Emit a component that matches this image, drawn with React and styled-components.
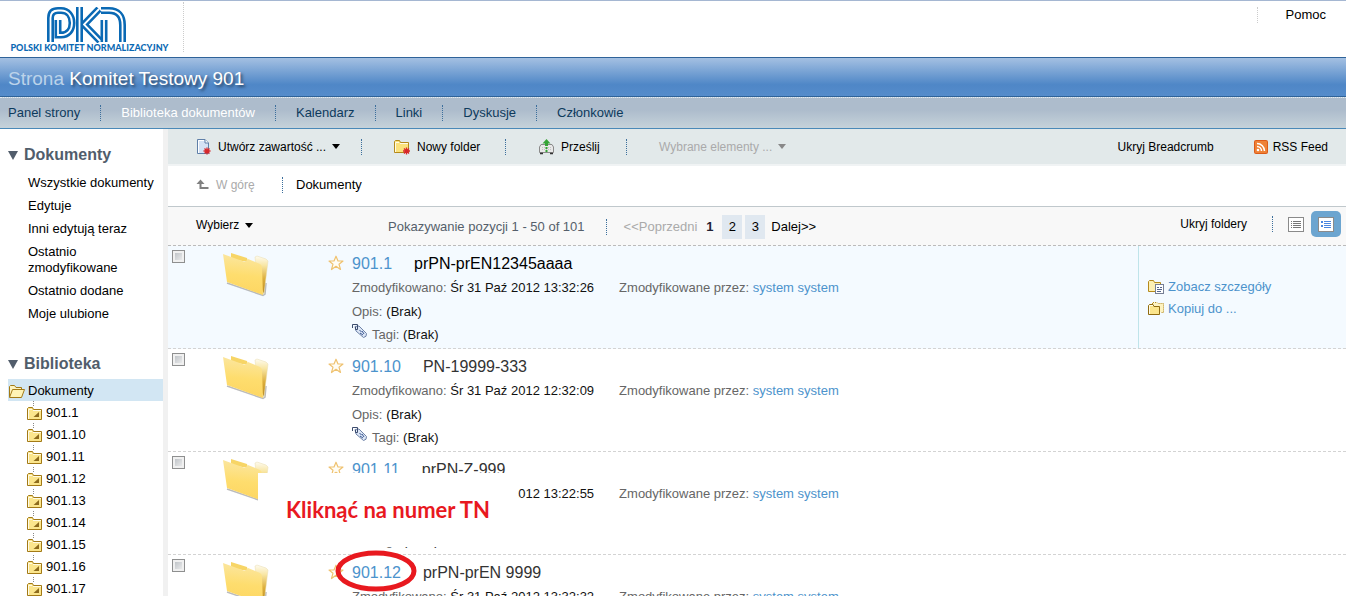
import React from "react";
import styled, { createGlobalStyle } from "styled-components";

const NAV = [
    { label: "Panel strony" },
    { label: "Biblioteka dokumentów", active: true },
    { label: "Kalendarz" },
    { label: "Linki" },
    { label: "Dyskusje" },
    { label: "Członkowie" },
];

const FILTERS = [
    "Wszystkie dokumenty",
    "Edytuje",
    "Inni edytują teraz",
    "Ostatnio zmodyfikowane",
    "Ostatnio dodane",
    "Moje ulubione",
];

const FOLDERS = ["901.1", "901.10", "901.11", "901.12", "901.13", "901.14", "901.15", "901.16", "901.17"];

const ROWS = [
    { id: "901.1", title: "prPN-prEN12345aaaa", date: "Śr 31 Paź 2012 13:32:26", hover: true },
    { id: "901.10", title: "PN-19999-333", date: "Śr 31 Paź 2012 12:32:09" },
    { id: "901.11", title: "prPN-Z-999", date: "Śr 31 Paź 2012 13:22:55", note: "Kliknąć na numer TN" },
    { id: "901.12", title: "prPN-prEN 9999", date: "Śr 31 Paź 2012 13:32:32", circled: true },
];

const LOGO_STROKES = [
    "M57 35V13",
    "M54 3.500H62C71 3.500 75.500 9 75.500 18V35",
    "M52 2L37 17.500L53 34",
    "M32.500 0V35",
    "M3.500 35V11Q3.500 3.500 11 3.500H14C21 3.500 25 9 25 16S21 28 14 28H11V13",
];

const LogoMark = () => (
    <svg width="80" height="36" viewBox="0 0 80 36" fill="none" aria-hidden="true">
        {LOGO_STROKES.map(d => (
            <g key={d}>
                <path d={d} stroke="#0a69b4" strokeWidth="7" />
                <path d={d} stroke="#fff" strokeWidth="1.800" />
            </g>
        ))}
    </svg>
);

const BigFolder = () => (
    <svg width="50" height="44" viewBox="0 0 50 44" aria-hidden="true">
        <defs>
            <linearGradient id="front" x1="0.3" y1="0" x2="0.2" y2="1">
                <stop offset="0" stopColor="#fbe6a0" />
                <stop offset="0.5" stopColor="#fedd6e" />
                <stop offset="1" stopColor="#fdd560" />
            </linearGradient>
            <linearGradient id="side" x1="0" y1="0" x2="0" y2="1">
                <stop offset="0" stopColor="#fefbf0" />
                <stop offset="0.25" stopColor="#f8e6a4" />
                <stop offset="0.6" stopColor="#dcae3c" />
                <stop offset="1" stopColor="#b98a22" />
            </linearGradient>
        </defs>
        <path d="M7 30L43 42.500L45 41L46 30" fill="none" stroke="#909090" strokeWidth="1.500" opacity="0.6" />
        <path d="M35 4L37 3L46 6L48 8L44 41L38 30Z" fill="url(#side)" stroke="#e9dcae" strokeWidth="0.500" />
        <path d="M11 0L27 5L28 9L11 6Z" fill="#f7d566" />
        <path d="M3 1L25 9L28 6L40 11Q42 12 42 15L43 42L7 29Z" fill="url(#front)" />
    </svg>
);

const SmallFolder = () => (
    <svg width="16" height="16" viewBox="0 0 16 16" aria-hidden="true">
        <path d="M0.500 3.500L1.500 2.500H5.500L6.500 4.500H14.500V14.500H0.500Z" fill="#fbe58c" stroke="#a37a16" />
        <path d="M1.500 14V4.500H5M6 5.500H14" fill="none" stroke="#fffbe6" />
        <path d="M12 7V12H6.500Z" fill="#8d6b1c" />
    </svg>
);

const OpenFolder = () => (
    <svg width="18" height="16" viewBox="0 0 18 16" aria-hidden="true">
        <path d="M1.500 14V3.500L2.500 2.500H6.500L8 4.500H13.500V7" fill="#fdf3c0" stroke="#a37a16" />
        <path d="M1.500 14.500L4.500 6.500H16.500L13.500 14.500Z" fill="#fff3b5" stroke="#a37a16" />
    </svg>
);

const Spark = ({ x, y }) => (
    <path
        transform={`translate(${x} ${y})`}
        d="M0 -3.500V3.500M-3.500 0H3.500M-2.500 -2.500L2.500 2.500M-2.500 2.500L2.500 -2.500"
        stroke="#d8262a"
        strokeWidth="1.300"
    />
);

const NewPageIcon = () => (
    <svg width="16" height="16" viewBox="0 0 16 16" aria-hidden="true">
        <path d="M1.500 0.500H9L12.500 4V14.500H1.500Z" fill="#d5e2f4" stroke="#5f7fa8" />
        <path d="M2.500 14V1.500H8" fill="none" stroke="#fff" />
        <path d="M9 0.500V4H12.500" fill="#fff" stroke="#5f7fa8" />
        <Spark x={11} y={12} />
    </svg>
);

const NewFolderIcon = () => (
    <svg width="17" height="16" viewBox="0 0 17 16" aria-hidden="true">
        <path d="M0.500 2.500L1.500 1.500H5.500L6.500 3.500H14.500V13.500H0.500Z" fill="#fbe27c" stroke="#b58a1c" />
        <path d="M1.500 13V3.500H5M6 4.500H14" fill="none" stroke="#fffbe6" />
        <Spark x={12.5} y={12} />
    </svg>
);

const UploadIcon = () => (
    <svg width="17" height="16" viewBox="0 0 17 16" aria-hidden="true">
        <path d="M3 5.500H14L15.500 8V13.500H1.500V8Z" fill="#e8e8e8" stroke="#8a8a8a" />
        <path d="M4 8.500H13M4 10.500H13" stroke="#c4c4c4" strokeDasharray="1 1" />
        <path d="M2 14.500H5M12 14.500H15" stroke="#333" strokeWidth="1.500" />
        <path d="M8.500 0L12.500 4.500H10V7H7V4.500H4.500Z" fill="#35a336" />
        <path d="M8.500 8V13" stroke="#35a336" strokeWidth="2" strokeDasharray="2 1" />
    </svg>
);

const UpIcon = () => (
    <svg width="14" height="12" viewBox="0 0 14 12" aria-hidden="true">
        <path d="M4.500 3V9H12.500" fill="none" stroke="#808080" strokeWidth="2" />
        <path d="M0.500 5L4.500 0.500L8.500 5Z" fill="#808080" />
    </svg>
);

const RssIcon = () => (
    <svg width="14" height="14" viewBox="0 0 14 14" fill="none" aria-hidden="true">
        <rect width="14" height="14" rx="2" fill="#dd5a17" />
        <rect x="1" y="1" width="12" height="12" rx="1" fill="#ee8136" />
        <path d="M3 6.500A4.500 4.500 0 0 1 7.500 11M3 3.500A7.500 7.500 0 0 1 10.500 11" stroke="#fff" strokeWidth="1.500" />
        <circle cx="4" cy="10" r="1.300" fill="#fff" />
    </svg>
);

const ListIcon = ({ detailed }) => (
    <svg width="16" height="15" viewBox="0 0 16 15" aria-hidden="true">
        <rect x="0.500" y="0.500" width="15" height="14" fill="#fff" stroke="#8a8a8a" />
        {detailed ? (
            <g stroke="#4a86e0">
                <path d="M3 5H5M3 9H5" strokeWidth="2" />
                <path d="M6 4.500H13M6 6.500H13M6 8.500H13M6 10.500H13" />
            </g>
        ) : (
            <path d="M3 4.500H4M3 6.500H4M3 8.500H4M3 10.500H4M5 4.500H13M5 6.500H13M5 8.500H13M5 10.500H13" stroke="#777" />
        )}
    </svg>
);

const StarIcon = () => (
    <svg width="16" height="16" viewBox="0 0 16 16" aria-hidden="true">
        <path
            d="M8 1.200L10 6H15L11 9.200L12.500 14.500L8 11.300L3.500 14.500L5 9.200L1 6H6Z"
            fill="#fffdf5"
            stroke="#efc270"
            strokeWidth="1.200"
            strokeLinejoin="round"
        />
    </svg>
);

const TagIcon = () => (
    <svg width="16" height="16" viewBox="0 0 16 16" fill="none" aria-hidden="true">
        <path d="M3 3.500L7 3L14.500 10.500Q15 14 11.500 14.500L4 8Z" fill="#dce6f6" stroke="#6f83a8" />
        <path d="M0.500 5V1.500H5.500V6.500H3.500V4" stroke="#3d4d6e" />
        <path d="M7.500 7L9.500 9M10 8L12 11M8 10L11 12" stroke="#37558f" />
    </svg>
);

const DetailsIcon = () => (
    <svg width="17" height="16" viewBox="0 0 17 16" aria-hidden="true">
        <path d="M0.500 2.500L1.500 1.500H5.500L6.500 3.500H12.500V12.500H0.500Z" fill="#fdf0b4" stroke="#b58a1c" />
        <rect x="7.500" y="5.500" width="8" height="9" fill="#fff" stroke="#777f95" />
        <path d="M9 8.500H11M12 8.500H14M9 10.500H14M9 12.500H13" stroke="#56658c" />
    </svg>
);

const CopyIcon = () => (
    <svg width="17" height="16" viewBox="0 0 17 16" aria-hidden="true">
        <path d="M4.500 3V1.500H9L10 2.500H15.500V11.500H13" fill="#fdf2c0" stroke="#b58a1c" strokeDasharray="1 1" />
        <path d="M0.500 4.500L1.500 3.500H5L6 5.500H11.500V13.500H0.500Z" fill="#fbe58c" stroke="#8f6a10" />
        <path d="M1.500 13V4.500H5" fill="none" stroke="#fffbe6" />
    </svg>
);

const DocumentRow = ({ row }) => (
    <Row $hover={row.hover}>
        <CheckCell>
            <Check type="checkbox" aria-label={`Wybierz ${row.id}`} />
        </CheckCell>
        <Thumb><BigFolder /></Thumb>
        <Star type="button" aria-label="Ulubione"><StarIcon /></Star>
        <Info>
            <RowTitle>
                <NumberLink href="#">
                    {row.id}
                    {row.circled && (
                        <Circle viewBox="0 0 84 44" aria-hidden="true">
                            <ellipse cx="42" cy="22" rx="38" ry="18" fill="none" stroke="#e8191f" strokeWidth="5" />
                        </Circle>
                    )}
                </NumberLink>
                <span>{row.title}</span>
            </RowTitle>
            <Meta>
                <MetaItem>Zmodyfikowano: <Value>{row.date}</Value></MetaItem>
                <MetaItem>Zmodyfikowane przez: <BlueLink href="#">system system</BlueLink></MetaItem>
            </Meta>
            <Detail>Opis: <Value>(Brak)</Value></Detail>
            <Detail><TagIcon /><span>Tagi: <Value>(Brak)</Value></span></Detail>
        </Info>
        {row.hover && (
            <Actions>
                <ActionLink href="#"><DetailsIcon />Zobacz szczegóły</ActionLink>
                <ActionLink href="#"><CopyIcon />Kopiuj do ...</ActionLink>
            </Actions>
        )}
        {row.note && <Note><span>{row.note}</span></Note>}
    </Row>
);

const App = () => {
    return (
        <Page>
            <GlobalStyle />
            <Header>
                <Logo>
                    <LogoMark />
                    <LogoText>POLSKI KOMITET NORMALIZACYJNY</LogoText>
                </Logo>
                <Help><PlainLink href="#">Pomoc</PlainLink></Help>
            </Header>
            <TitleBar><SiteWord>Strona</SiteWord> Komitet Testowy 901</TitleBar>
            <Nav>
                {NAV.map(item => (
                    <NavItem key={item.label}>
                        <NavLink href="#" $active={item.active}>{item.label}</NavLink>
                    </NavItem>
                ))}
            </Nav>
            <Body>
                <Sidebar>
                    <SideTitle><Triangle />Dokumenty</SideTitle>
                    <FilterList>
                        {FILTERS.map(name => (
                            <li key={name}><PlainLink href="#">{name}</PlainLink></li>
                        ))}
                    </FilterList>
                    <SideTitle><Triangle />Biblioteka</SideTitle>
                    <TreeRoot href="#"><OpenFolder />Dokumenty</TreeRoot>
                    <Tree>
                        {FOLDERS.map(name => (
                            <TreeItem key={name}>
                                <TreeLink href="#"><SmallFolder />{name}</TreeLink>
                            </TreeItem>
                        ))}
                    </Tree>
                </Sidebar>
                <Main>
                    <Toolbar>
                        <Tools>
                            <ToolCell><Tool type="button"><NewPageIcon />Utwórz zawartość ...<Caret /></Tool></ToolCell>
                            <ToolCell><Tool type="button"><NewFolderIcon />Nowy folder</Tool></ToolCell>
                            <ToolCell><Tool type="button"><UploadIcon />Prześlij</Tool></ToolCell>
                            <ToolCell><Tool type="button" disabled>Wybrane elementy ...<Caret $muted /></Tool></ToolCell>
                        </Tools>
                        <RightTools>
                            <Tool type="button">Ukryj Breadcrumb</Tool>
                            <RssLink href="#"><RssIcon />RSS Feed</RssLink>
                        </RightTools>
                    </Toolbar>
                    <Breadcrumb>
                        <UpCell><Tool type="button" disabled><UpIcon />W górę</Tool></UpCell>
                        <PlainLink href="#">Dokumenty</PlainLink>
                    </Breadcrumb>
                    <PagerBar>
                        <SelectCell><Tool type="button">Wybierz<Caret /></Tool></SelectCell>
                        <Pager>
                            <Report>Pokazywanie pozycji 1 - 50 of 101</Report>
                            <Pages>
                                <Prev>&lt;&lt;Poprzedni</Prev>
                                <CurrentPage>1</CurrentPage>
                                <PageLink href="#">2</PageLink>
                                <PageLink href="#">3</PageLink>
                                <NextLink href="#">Dalej&gt;&gt;</NextLink>
                            </Pages>
                        </Pager>
                        <ViewOptions>
                            <HideFolders><Tool type="button">Ukryj foldery</Tool></HideFolders>
                            <ViewButton type="button" aria-label="Widok prosty"><ListIcon /></ViewButton>
                            <ViewButton type="button" aria-label="Widok szczegółowy" $on><ListIcon detailed /></ViewButton>
                        </ViewOptions>
                    </PagerBar>
                    <Rows>
                        {ROWS.map(row => <DocumentRow key={row.id} row={row} />)}
                    </Rows>
                </Main>
            </Body>
        </Page>
    )
}

const GlobalStyle = createGlobalStyle`
    * {
        box-sizing: border-box;
    }
    body {
        margin: 0;
        background-color: #fff;
        color: #000;
        font-family: "Liberation Sans", Arial, sans-serif;
        font-size: 13px;
        line-height: 16px;
    }
    a {
        text-decoration: none;
    }
    ul {
        margin: 0;
        padding: 0;
        list-style: none;
    }
    button {
        border: 0;
        padding: 0;
        background: none;
        font: inherit;
        color: inherit;
    }
    svg {
        flex: none;
        display: block;
    }
`;

const Page = styled.div`
    display: flex;
    flex-direction: column;
    height: calc(100vh - 3px);
    overflow: hidden;
`;

const Header = styled.header`
    flex: none;
    display: flex;
    justify-content: space-between;
    align-items: flex-start;
    height: 57px;
    border-top: 1px solid #a5b7d2;
`;
const Logo = styled.div`
    display: flex;
    flex-direction: column;
    align-items: center;
    width: 184px;
    height: 50px;
    margin-top: 1px;
    padding: 5px 10px 0 0;
    border-right: 1px dotted #ccc;
`;
const LogoText = styled.span`
    padding-left: 6px;
    font-family: Lato, sans-serif;
    font-size: 9px;
    font-weight: 900;
    line-height: 10px;
    white-space: nowrap;
    color: #0a69b4;
`;
const Help = styled.div`
    margin-top: 6px;
    padding: 0 20px 0 28px;
    border-left: 1px dotted #ccc;
`;
const PlainLink = styled.a`
    color: #000;
`;

const TitleBar = styled.h1`
    flex: none;
    height: 40px;
    margin: 0;
    padding-left: 8px;
    border-top: 1px solid #2f6399;
    border-bottom: 1px solid #2f6399;
    background: linear-gradient(#a4c0e2, #4f87c7 70%, #558ccb);
    font-size: 19px;
    font-weight: 400;
    line-height: 42px;
    color: #fff;
    text-shadow: 2px 2px 3px rgba(0,0,0,0.5);
`;
const SiteWord = styled.span`
    color: #bcd3ea;
    text-shadow: none;
`;

const Nav = styled.nav`
    flex: none;
    display: flex;
    align-items: center;
    height: 32px;
    padding-left: 8px;
    border-top: 1px dotted #e4ebf2;
    border-bottom: 1px solid #4a89b8;
    background: linear-gradient(#adbccc 40%, #c5d2da);
`;
const NavItem = styled.div`
    padding-right: 20px;
    & + & {
        padding-left: 20px;
        border-left: 1px dotted #3c6f9c;
    }
`;
const NavLink = styled.a`
    color: ${props => props.$active ? "#fff" : "#0d3a5c"};
`;

const Body = styled.div`
    flex: 1;
    min-height: 0;
    display: flex;
`;
const Sidebar = styled.aside`
    flex: none;
    width: 168px;
    padding: 16px 0 0 8px;
    border-right: 5px solid #f1f1f1;
`;
const SideTitle = styled.h2`
    display: flex;
    align-items: center;
    gap: 6px;
    margin: 0;
    font-size: 16px;
    line-height: 20px;
    color: #515d6b;
`;
const Triangle = styled.span`
    border: 5px solid transparent;
    border-top: 9px solid #515d6b;
    border-bottom: 0;
`;
const FilterList = styled.ul`
    display: flex;
    flex-direction: column;
    gap: 7px;
    padding: 10px 0 32px 20px;
`;
const TreeRoot = styled.a`
    display: flex;
    align-items: center;
    gap: 2px;
    height: 22px;
    margin-top: 5px;
    padding-top: 1px;
    background-color: #d2e6f3;
    color: #000;
`;
const Tree = styled.ul`
    padding-left: 19px;
`;
const TreeItem = styled.li`
    background: repeating-linear-gradient(#888 0 1px, transparent 1px 2px) 6px 0 / 1px 6px no-repeat;
`;
const TreeLink = styled.a`
    display: flex;
    align-items: center;
    gap: 3px;
    height: 22px;
    padding-top: 1px;
    color: #000;
`;

const Main = styled.main`
    flex: 1;
    min-width: 0;
`;
const Toolbar = styled.div`
    display: flex;
    justify-content: space-between;
    align-items: center;
    height: 37px;
    padding-right: 18px;
    border-bottom: 2px solid #f0f3f4;
    background-color: #e2e9ea;
`;
const Tools = styled.div`
    display: grid;
    grid-template-columns: 194px 144px 121px auto;
`;
const ToolCell = styled.div`
    padding-left: 32px;
    &:first-child {
        padding-left: 28px;
    }
    &:not(:last-child) {
        border-right: 1px dotted #3c6f9c;
    }
`;
const Tool = styled.button`
    display: flex;
    align-items: center;
    gap: 6px;
    font-size: 12px;
    white-space: nowrap;
    color: ${props => props.disabled ? "#aaa" : "#000"};
`;
const Caret = styled.span`
    border: 4px solid transparent;
    border-top: 5px solid ${props => props.$muted ? "#888" : "#000"};
    border-bottom: 0;
`;
const RightTools = styled.div`
    display: flex;
    align-items: center;
    gap: 40px;
`;
const RssLink = styled.a`
    display: flex;
    align-items: center;
    gap: 5px;
    font-size: 12px;
    color: #000;
`;
const Breadcrumb = styled.div`
    display: flex;
    align-items: center;
    height: 41px;
    padding: 0 0 2px 28px;
    border-bottom: 1px solid #c0c8cc;
`;
const UpCell = styled.div`
    width: 87px;
    margin-right: 13px;
    border-right: 1px dotted #3c6f9c;
`;

const PagerBar = styled.div`
    display: flex;
    align-items: center;
    height: 39px;
    padding: 0 5px 0 28px;
    border-bottom: 1px dashed #bbb;
    background-color: #f8f8f8;
`;
const SelectCell = styled.div`
    width: 192px;
    padding-bottom: 2px;
`;
const Pager = styled.div`
    flex: 1;
    display: flex;
    align-items: center;
    padding-top: 2px;
    color: #555f6b;
`;
const Report = styled.span`
    padding-right: 21px;
    border-right: 1px dotted #3c6f9c;
`;
const Pages = styled.div`
    display: flex;
    align-items: center;
    gap: 3px;
    padding-left: 17px;
    line-height: 24px;
`;
const Prev = styled.span`
    color: #aaa;
`;
const CurrentPage = styled.strong`
    width: 19px;
    text-align: center;
    color: #223;
`;
const PageLink = styled.a`
    width: 20px;
    text-align: center;
    background-color: #e0e8f0;
    color: #000;
`;
const NextLink = styled.a`
    padding-left: 3px;
    color: #000;
`;
const ViewOptions = styled.div`
    display: flex;
    align-items: center;
    padding-bottom: 4px;
`;
const HideFolders = styled.div`
    padding-right: 25px;
    margin-right: 8px;
    border-right: 1px dotted #3c6f9c;
`;
const ViewButton = styled.button`
    display: flex;
    align-items: center;
    justify-content: center;
    width: 30px;
    height: 26px;
    border-radius: 5px;
    background-color: ${props => props.$on ? "#6ca5d0" : "transparent"};
`;

const Rows = styled.ul`
    display: flex;
    flex-direction: column;
`;
const Row = styled.li`
    position: relative;
    flex: none;
    display: flex;
    height: 103px;
    border-bottom: 1px dashed #d3d3d3;
    background-color: ${props => props.$hover ? "#f4faff" : "#fff"};
    color: ${props => props.$hover ? "#000" : "#333"};
`;
const CheckCell = styled.div`
    width: 52px;
    padding: 4px 0 0 4px;
`;
const Check = styled.input`
    appearance: none;
    display: block;
    width: 13px;
    height: 13px;
    margin: 0;
    border: 1px solid #8e8f8f;
    background: linear-gradient(135deg, #b5babf, #f4f4f4);
    box-shadow: inset 0 0 0 2px #f0f0f0;
`;
const Thumb = styled.div`
    width: 108px;
    padding-top: 7px;
`;
const Star = styled.button`
    align-self: flex-start;
    width: 24px;
    padding-top: 9px;
`;
const Info = styled.div`
    flex: 1;
    padding-top: 8px;
`;
const RowTitle = styled.h3`
    display: flex;
    gap: 22px;
    margin: 0;
    font-size: 16px;
    font-weight: 400;
    line-height: 20px;
`;
const BlueLink = styled.a`
    color: #4c93cc;
`;
const NumberLink = styled(BlueLink)`
    position: relative;
`;
const Meta = styled.div`
    display: flex;
    gap: 25px;
    padding: 6px 0 8px;
`;
const MetaItem = styled.span`
    color: #666;
`;
const Value = styled.span`
    color: #111;
`;
const Detail = styled.div`
    display: flex;
    gap: 4px;
    height: 16px;
    color: #666;
    & + & {
        margin-top: 7px;
    }
    & > svg {
        margin-top: -4px;
    }
`;
const Actions = styled.div`
    display: flex;
    flex-direction: column;
    gap: 6px;
    width: 208px;
    padding: 33px 0 0 9px;
    border-left: 1px solid #bfe4ea;
`;
const ActionLink = styled(BlueLink)`
    display: flex;
    gap: 3px;
`;

/* hand-made marks laid over the listing */
const Note = styled.div`
    position: absolute;
    top: 21px;
    left: 90px;
    display: flex;
    align-items: center;
    width: 260px;
    height: 74px;
    padding-left: 28px;
    background-color: #fff;
    font-family: Lato, sans-serif;
    font-size: 22px;
    font-weight: 700;
    line-height: 24px;
    white-space: nowrap;
    color: #e8191f;
`;
const Circle = styled.svg`
    position: absolute;
    top: 8px;
    left: 50%;
    width: 84px;
    height: 44px;
    transform: translate(-50%, -50%);
`;

export default App
